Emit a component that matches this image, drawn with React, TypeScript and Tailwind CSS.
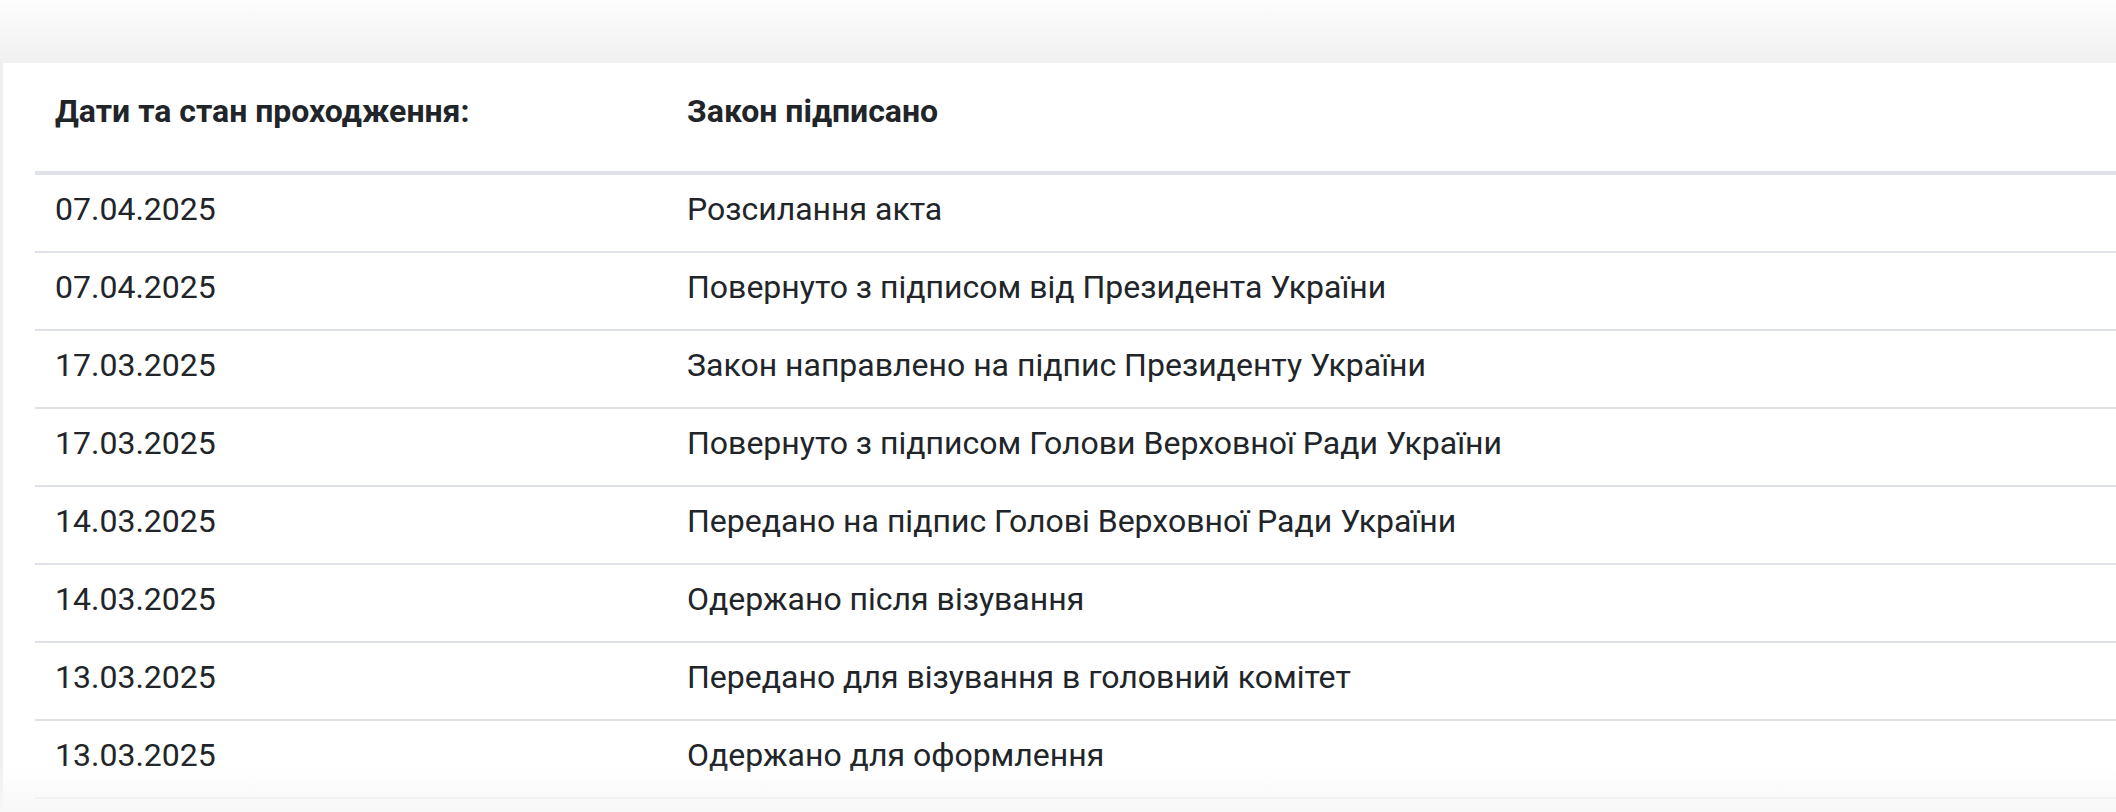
const rows = [
  ["07.04.2025", "Розсилання акта"],
  ["07.04.2025", "Повернуто з підписом від Президента України"],
  ["17.03.2025", "Закон направлено на підпис Президенту України"],
  ["17.03.2025", "Повернуто з підписом Голови Верховної Ради України"],
  ["14.03.2025", "Передано на підпис Голові Верховної Ради України"],
  ["14.03.2025", "Одержано після візування"],
  ["13.03.2025", "Передано для візування в головний комітет"],
  ["13.03.2025", "Одержано для оформлення"],
];

export default function App() {
  return (
    <div className="relative min-h-[812px] overflow-hidden bg-[#efefef] font-['Roboto',sans-serif] text-[#212529]">
      {/* shadow band above the card */}
      <div className="h-[63px] bg-gradient-to-b from-[#fdfdfd] to-[#f0f0f0]" />

      <div className="ml-[3px] min-h-[749px] bg-white pl-8">
        <div className="grid grid-cols-[632px_1fr] border-b-4 border-[#dee2e6] pt-6 pb-9 text-[32px] font-bold leading-[48px]">
          <div className="px-5">Дати та стан проходження:</div>
          <div className="px-5">Закон підписано</div>
        </div>

        {rows.map(([date, status], i) => (
          <div
            key={i}
            className="grid h-[78px] grid-cols-[632px_1fr] items-center border-b-2 border-[#dee2e6] pb-2 text-[32px] leading-[48px]"
          >
            <div className="px-5">{date}</div>
            <div className="px-5">{status}</div>
          </div>
        ))}
      </div>

      {/* fade at the bottom edge */}
      <div className="pointer-events-none absolute inset-x-0 bottom-0 h-[48px] bg-gradient-to-b from-white/0 to-[#f8f8f8]" />
    </div>
  );
}
